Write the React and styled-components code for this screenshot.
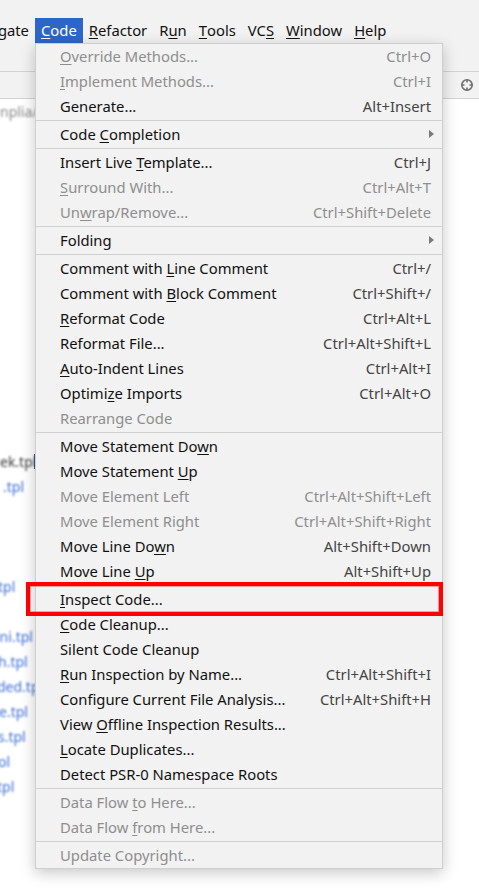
import React from "react";
import styled, { createGlobalStyle } from "styled-components";

const GlobalStyle = createGlobalStyle`
  html, body {
    margin: 0;
    padding: 0;
    background: #ffffff;
  }
  body {
    font-family: "Noto Sans", "Open Sans", sans-serif;
    font-size: 14.8px;
  }
`;

const menuBarItems = [
  { label: "Navigate", lead: true },
  { label: "&Code", active: true },
  { label: "&Refactor" },
  { label: "R&un" },
  { label: "&Tools" },
  { label: "VC&S" },
  { label: "&Window" },
  { label: "&Help" },
];

const SEP = "sep";

const codeMenu = [
  { label: "&Override Methods...", shortcut: "Ctrl+O", disabled: true },
  { label: "&Implement Methods...", shortcut: "Ctrl+I", disabled: true },
  { label: "Generate...", shortcut: "Alt+Insert" },
  SEP,
  { label: "Code &Completion", submenu: true },
  SEP,
  { label: "Insert Live &Template...", shortcut: "Ctrl+J" },
  { label: "&Surround With...", shortcut: "Ctrl+Alt+T", disabled: true },
  { label: "Un&wrap/Remove...", shortcut: "Ctrl+Shift+Delete", disabled: true },
  SEP,
  { label: "Folding", submenu: true },
  SEP,
  { label: "Comment with &Line Comment", shortcut: "Ctrl+/" },
  { label: "Comment with &Block Comment", shortcut: "Ctrl+Shift+/" },
  { label: "&Reformat Code", shortcut: "Ctrl+Alt+L" },
  { label: "Reformat File...", shortcut: "Ctrl+Alt+Shift+L" },
  { label: "&Auto-Indent Lines", shortcut: "Ctrl+Alt+I" },
  { label: "Optimi&ze Imports", shortcut: "Ctrl+Alt+O" },
  { label: "Rearrange Code", disabled: true },
  SEP,
  { label: "Move Statement Do&wn" },
  { label: "Move Statement &Up" },
  { label: "Move Element Left", shortcut: "Ctrl+Alt+Shift+Left", disabled: true },
  { label: "Move Element Right", shortcut: "Ctrl+Alt+Shift+Right", disabled: true },
  { label: "Move Line Do&wn", shortcut: "Alt+Shift+Down" },
  { label: "Move Line &Up", shortcut: "Alt+Shift+Up" },
  SEP,
  { label: "&Inspect Code...", marked: true },
  { label: "&Code Cleanup..." },
  { label: "Silent Code Cleanup" },
  { label: "&Run Inspection by Name...", shortcut: "Ctrl+Alt+Shift+I" },
  { label: "Configure Current File Analysis...", shortcut: "Ctrl+Alt+Shift+H" },
  { label: "View &Offline Inspection Results..." },
  { label: "&Locate Duplicates..." },
  { label: "Detect PSR-0 Namespace Roots" },
  SEP,
  { label: "Data Flow &to Here...", disabled: true },
  { label: "Data Flow &from Here...", disabled: true },
  SEP,
  { label: "Update Copyright...", disabled: true },
];

// rows of the project tree peeking out left of the menu (blurred in the shot)
const treeRows = {
  0: { text: "nplia/", tone: "grey" },
  14: { text: "ek.tpl", tone: "dark", caret: true },
  15: { text: ".tpl", tone: "blue", indent: 3 },
  19: { text: "tpl", tone: "blue", indent: -2 },
  21: { text: "ini.tpl", tone: "blue", indent: -4 },
  22: { text: "h.tpl", tone: "blue", indent: -2 },
  23: { text: "ded.tpl", tone: "blue", indent: -3 },
  24: { text: "e.tpl", tone: "blue", indent: -1 },
  25: { text: "s.tpl", tone: "blue", indent: -2 },
  26: { text: "ol", tone: "blue", indent: -2 },
  27: { text: "tpl", tone: "blue", indent: -3 },
};

const toneColors = {
  grey: "#8a8a8a",
  dark: "#3a3a3a",
  blue: "#3c6fd8",
};

const Label = ({ text }) => {
  const i = text.indexOf("&");
  if (i < 0) return <>{text}</>;
  return (
    <>
      {text.slice(0, i)}
      <Mnemonic>{text[i + 1]}</Mnemonic>
      {text.slice(i + 2)}
    </>
  );
};

const Crosshair = () => (
  <svg width="14" height="14" viewBox="0 0 14 14" fill="none">
    <circle cx="7" cy="7" r="5.2" stroke="#6f6f6f" strokeWidth="1.6" />
    <path d="M7 1.5v3M7 9.5v3M1.5 7h3M9.5 7h3" stroke="#6f6f6f" strokeWidth="1.6" />
  </svg>
);

const App = () => {
  const rows = Array.from({ length: 30 }, (_, i) => treeRows[i] || null);

  return (
    <Window>
      <GlobalStyle />
      <MenuBar>
        {menuBarItems.map((item) => (
          <BarItem key={item.label} $active={item.active} $lead={item.lead}>
            <Label text={item.label} />
          </BarItem>
        ))}
      </MenuBar>
      <Toolbar />
      <TabRow>
        <Crosshair />
      </TabRow>
      <Body>
        <Tree>
          {rows.map((row, i) => (
            <TreeRow key={i}>
              {row && (
                <TreeText $tone={row.tone} $indent={row.indent || 0}>
                  {row.text}
                </TreeText>
              )}
              {row && row.caret && <Caret />}
            </TreeRow>
          ))}
        </Tree>
      </Body>

      <Dropdown>
        {codeMenu.map((item, i) =>
          item === SEP ? (
            <Separator key={i} />
          ) : (
            <MenuItem key={i} $disabled={item.disabled} $marked={item.marked}>
              <ItemLabel>
                <Label text={item.label} />
              </ItemLabel>
              {item.shortcut && <Shortcut $disabled={item.disabled}>{item.shortcut}</Shortcut>}
              {item.submenu && <SubArrow />}
            </MenuItem>
          )
        )}
      </Dropdown>
    </Window>
  );
};

export default App;

const Window = styled.div`
  position: relative;
  width: 479px;
  height: 894px;
  overflow: hidden;
  background: #ffffff;
`;

const MenuBar = styled.div`
  display: flex;
  align-items: stretch;
  padding-top: 18px;
  height: 25px;
  background: #f2f2f2;
  white-space: nowrap;
`;

const BarItem = styled.div`
  display: flex;
  align-items: center;
  padding: 0 6px;
  margin-left: ${(p) => (p.$lead ? "-39px" : "0")};
  color: ${(p) => (p.$active ? "#ffffff" : "#111111")};
  background: ${(p) => (p.$active ? "#2f65c8" : "transparent")};
  line-height: 25px;
`;

const Mnemonic = styled.span`
  text-decoration: underline;
  text-decoration-thickness: 1px;
  text-underline-offset: 2px;
`;

const Toolbar = styled.div`
  height: 28px;
  background: #f2f2f2;
  border-bottom: 1px solid #d3d3d3;
`;

const TabRow = styled.div`
  display: flex;
  align-items: center;
  justify-content: flex-end;
  height: 26px;
  padding-right: 5px;
  background: #f2f2f2;
  border-bottom: 1px solid #d3d3d3;
`;

const Body = styled.div`
  background: #ffffff;
`;

const Tree = styled.div`
  display: flex;
  flex-direction: column;
  width: 40px;
  overflow: hidden;
`;

const TreeRow = styled.div`
  display: flex;
  align-items: center;
  height: 25px;
  white-space: nowrap;
`;

const TreeText = styled.span`
  margin-left: ${(p) => p.$indent}px;
  font-size: 14px;
  color: ${(p) => toneColors[p.$tone]};
  filter: blur(1.3px);
`;

const Caret = styled.span`
  width: 2px;
  height: 15px;
  margin-left: -2px;
  background: #2f65c8;
`;

const Dropdown = styled.div`
  position: absolute;
  top: 43px;
  left: 35px;
  width: 408px;
  box-sizing: border-box;
  display: flex;
  flex-direction: column;
  background: #f2f2f2;
  border: 1px solid #cfcfcf;
  box-shadow: 0 4px 14px rgba(0, 0, 0, 0.22);
  z-index: 10;
`;

const MenuItem = styled.div`
  position: relative;
  box-sizing: border-box;
  display: flex;
  align-items: center;
  height: 25px;
  padding: 0 11px 1px 24px;
  color: ${(p) => (p.$disabled ? "#8e8e8e" : "#111111")};
  white-space: nowrap;

  ${(p) =>
    p.$marked &&
    `
    &::after {
      content: "";
      position: absolute;
      top: -5px;
      left: -10px;
      right: -1px;
      bottom: -4px;
      border: 4px solid #ff0000;
      box-shadow: inset 0 0 0 1px rgba(255, 0, 0, 0.35);
    }
  `}
`;

const ItemLabel = styled.span`
  flex: 1;
`;

const Shortcut = styled.span`
  color: ${(p) => (p.$disabled ? "#8e8e8e" : "#444444")};
`;

const SubArrow = styled.span`
  width: 0;
  height: 0;
  margin-right: -3px;
  border-top: 4px solid transparent;
  border-bottom: 4px solid transparent;
  border-left: 5px solid #7a7a7a;
`;

const Separator = styled.div`
  height: 1px;
  margin: 1px 0;
  background: #d0d0d0;
`;
